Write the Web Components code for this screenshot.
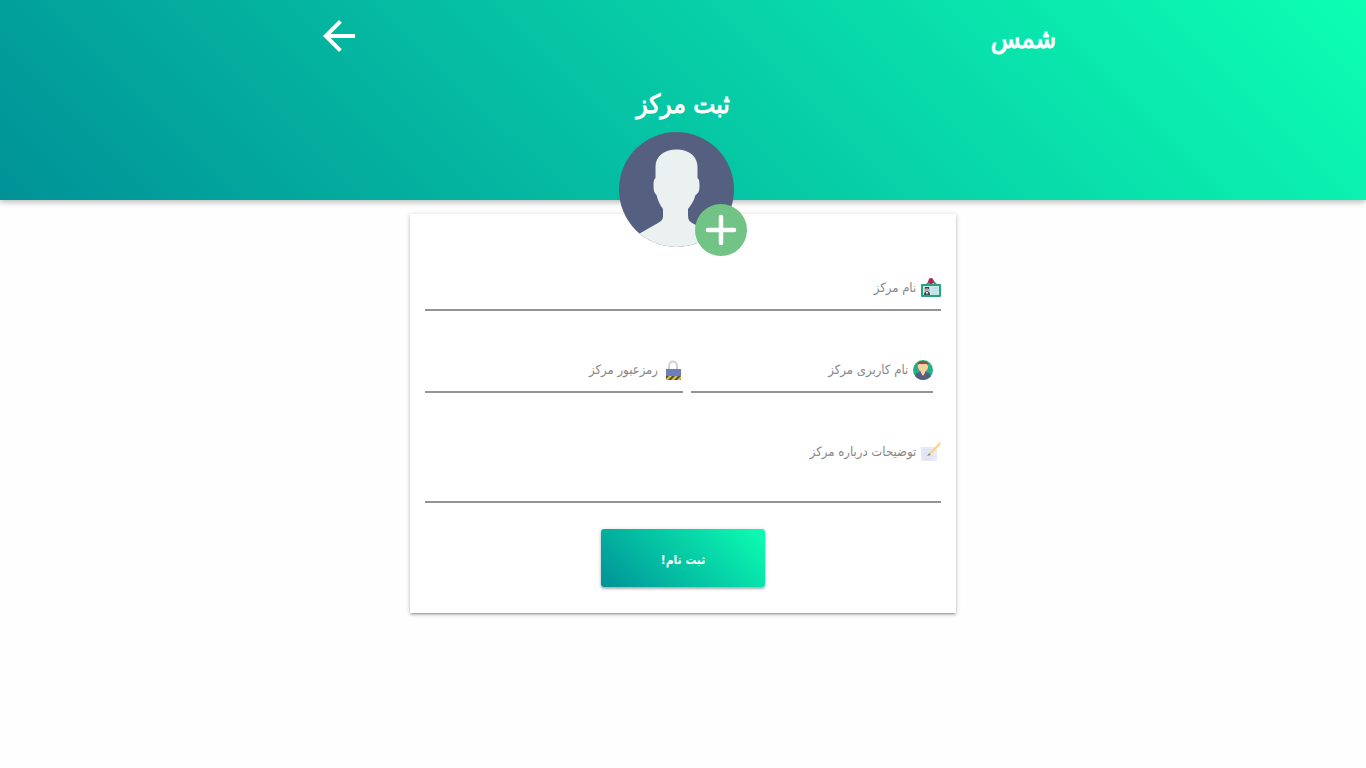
<!DOCTYPE html>
<html lang="fa" dir="rtl">
<head>
<meta charset="utf-8">
<title>ثبت مرکز</title>
<style>
  body { margin: 0; box-sizing: border-box; min-height: 100vh; padding-bottom: 24px; background: #fefefe; font-family: "DejaVu Sans Condensed", "DejaVu Sans", sans-serif; --brand: linear-gradient(45deg, #009297, #0cffb3); }
</style>
</head>
<body>
<register-page></register-page>

<template id="t-page">
  <style>
    :host { display: block; padding-bottom: 24px; }
    main { width: 40%; min-width: 320px; margin: 14px auto 0; }
  </style>
  <page-header brand="شمس" heading="ثبت مرکز"></page-header>
  <main>
    <form-card>
      <avatar-picker slot="avatar"></avatar-picker>
      <form-field label="نام مرکز" name="center">
        <svg slot="icon" viewBox="0 0 20 20" width="20" height="20">
          <path d="M0 7q0-1 1-1h4l4-4h3l4 4h3q1 0 1 1v11q0 1-1 1H1q-1 0-1-1z" fill="#28a37c"/>
          <path d="M2 8h16v9H2z" fill="#c9e9ec"/>
          <path d="M8 6l2-3 3 3z" fill="#e8f4f2"/>
          <path d="M8 1q2-2 4 0l1 3-2 2H9L7 4z" fill="#b91f55"/>
          <path d="M3 9h6v8H3z" fill="#a5cdd8"/>
          <circle cx="6" cy="11" r="2" fill="#d39b80"/>
          <path d="M4 11V9h4v2L6 10zM3 17c0-5 6-5 6 0z" fill="#34465d"/>
          <path d="M5 14h2l-1 3z" fill="#fff"/>
          <path d="M11 10h6M11 13h6M11 16h6" stroke="#a9d3da" stroke-opacity=".7"/>
        </svg>
      </form-field>
      <field-row>
        <form-field class="inset" label="نام کاربری مرکز" name="user">
          <svg slot="icon" viewBox="0 0 20 20" width="20" height="20">
            <circle cx="10" cy="10" r="10" fill="#25ae88"/>
            <path d="M2 16c1-3 3-4 6-4h4c3 0 5 1 6 4a10 10 0 0 1-16 0z" fill="#556080"/>
            <path d="M8 10h4v3l-2 3-2-3z" fill="#fbce9d"/>
            <path d="M5 4h10c1 5-2 8-5 8S4 9 5 4z" fill="#fbce9d"/>
            <path d="M5 5c-1-3 2-4 5-4s6 1 5 5l-1-2H6z" fill="#7b5a3d"/>
          </svg>
        </form-field>
        <form-field label="رمزعبور مرکز" name="password" type="password">
          <svg slot="icon" viewBox="0 0 20 20" width="20" height="20">
            <path d="M6 10V6c0-6 8-6 8 0v4" fill="none" stroke="#cfd0d2" stroke-width="2"/>
            <path d="M3 9h15v11H3z" fill="#6c7dbb"/>
            <path d="M3 16h15v4H3z" fill="#4b5058"/>
            <path d="M3 19l3-3h3l-4 4H3zM8 20l4-4h3l-4 4zM14 20l4-4v3l-1 1z" fill="#e8c02c"/>
          </svg>
        </form-field>
      </field-row>
      <form-field label="توضیحات درباره مرکز" name="about" multiline>
        <svg slot="icon" viewBox="0 0 20 20" width="20" height="20">
          <path d="M0 5h16v14H0z" fill="#e8ebf7"/>
          <path d="M2 8h8M2 11h5M2 14h11M2 17h9" stroke="#d8dcec"/>
          <path d="M8 11L18 1l2-1-1 3L9 13z" fill="#fad083"/>
          <path d="M6 14l2-3 2 2z" fill="#8b8d99"/>
        </svg>
      </form-field>
      <submit-button slot="action">ثبت نام!</submit-button>
    </form-card>
  </main>
</template>

<template id="t-header">
  <style>
    :host { display: block; }
    header { height: 200px; box-sizing: border-box; padding-top: 12px; background: var(--brand); color: #fff;
      box-shadow: 0 2px 5px rgba(0,0,0,.2), 0 2px 8px rgba(0,0,0,.1); }
    nav { display: flex; align-items: center; justify-content: space-between; box-sizing: border-box; max-width: 746px; margin: 0 auto; padding-left: 5px; height: 48px; }
    a { color: inherit; text-decoration: none; }
    .brand { padding-top: 6px; font-size: 27px; line-height: 48px; -webkit-text-stroke: 1px; }
    .back, svg { display: block; }
    h1 { margin: 24px 0 0; font-size: 26px; font-weight: 400; line-height: 40px; text-align: center; -webkit-text-stroke: 1px; }
  </style>
  <header>
    <nav>
      <a class="brand" href="#"></a>
      <a class="back" href="#" aria-label="بازگشت"><svg width="48" height="48" viewBox="0 0 24 24"><path fill="#fff" d="M20 11H7.830l5.590-5.590L12 4l-8 8 8 8 1.410-1.410L7.830 13H20v-2z"/></svg></a>
    </nav>
    <h1></h1>
  </header>
</template>

<template id="t-card">
  <style>
    :host { display: block; }
    form { display: flex; flex-direction: column; box-sizing: border-box; padding: 0 15px 26px; background: #fff;
      box-shadow: 0 2px 2px rgba(0,0,0,.14), 0 3px 1px -2px rgba(0,0,0,.12), 0 1px 5px rgba(0,0,0,.2); }
    .avatar { display: flex; justify-content: center; margin: -82px 0 11px; }
    .fields { display: flex; flex-direction: column; gap: 38px; }
    .action { display: flex; justify-content: center; margin-top: 26px; }
  </style>
  <form>
    <div class="avatar"><slot name="avatar"></slot></div>
    <div class="fields"><slot></slot></div>
    <div class="action"><slot name="action"></slot></div>
  </form>
</template>

<template id="t-avatar">
  <style>
    :host { display: block; }
    button { display: block; padding: 0; border: 0; background: none; cursor: pointer; }
    svg { display: block; }
  </style>
  <button type="button" aria-label="افزودن تصویر">
    <svg width="128" height="124" viewBox="0 0 128 124">
      <defs><clipPath id="disc"><circle cx="57.5" cy="57.5" r="57.5"/></clipPath></defs>
      <g clip-path="url(#disc)">
        <path d="M0 0h116v116H0z" fill="#556080"/>
        <path fill="#ebf0f0" d="M36.500 46V35C36.500 24 45 17.500 57.500 17.500S78.500 24 78.500 35V46C80 47 80.500 49 80.500 53.500S80 61 76.500 63C75 69 72 73 69 77V84C69 88 71 90 74 91.500L95 103V118H18V103L39 91C42 89 44 88 44 84V77C41 73 39 69 37.500 63C35 61 34.500 58 34.500 53.500S35 47 36.500 46Z"/>
      </g>
      <circle cx="102" cy="98" r="26" fill="#71c386"/>
      <path d="M102 85v26M89 98h26" stroke="#fff" stroke-width="4.500" stroke-linecap="round"/>
    </svg>
  </button>
</template>

<template id="t-row">
  <style>
    :host { display: grid; grid-template-columns: 1fr 1fr; }
    ::slotted(.inset) { margin: 0 8px; }
  </style>
  <slot></slot>
</template>

<template id="t-field">
  <style>
    :host { display: block; min-width: 0; }
    .field { display: grid; grid-template-columns: minmax(0, 1fr); height: 44px; }
    :host([multiline]) .field { height: 72px; }
    label, input, textarea { grid-area: 1 / 1; }
    label { z-index: 1; display: flex; align-items: center; align-self: start; gap: 5px; margin-top: 11px; height: 20px; color: #888; font-size: 13px; line-height: 20px; pointer-events: none; }
    input, textarea { box-sizing: border-box; width: 100%; height: 100%; margin: 0; padding: 8px 25px 8px 0; border: 0; border-bottom: 2px solid #949494; border-radius: 0;
      background: none; font: inherit; font-size: 13px; resize: none; outline: 0; }
    .field:focus-within :is(input, textarea) { border-color: #00b39d; }
    .typed label span { visibility: hidden; }
  </style>
  <div class="field"><label for="control"><slot name="icon"></slot><span></span></label></div>
</template>

<template id="t-submit">
  <style>
    :host { display: block; }
    button { min-width: 164px; height: 58px; padding: 4px 16px 0; border: 0; border-radius: 3px; background: var(--brand); color: #fff; font-family: inherit; font-size: 12px; font-weight: 700; line-height: 20px; cursor: pointer;
      box-shadow: 0 2px 2px rgba(0,0,0,.2), 0 1px 4px rgba(0,0,0,.2); }
  </style>
  <button type="submit"><slot></slot></button>
</template>

<script>
  class Base extends HTMLElement {
    constructor() {
      super();
      this.attachShadow({ mode: 'open' }).append(document.importNode(document.getElementById(this.constructor.template).content, true));
    }
    $(selector) { return this.shadowRoot.querySelector(selector); }
  }
  customElements.define('page-header', class extends Base {
    static template = 't-header';
    connectedCallback() {
      this.$('.brand').textContent = this.getAttribute('brand');
      this.$('h1').textContent = this.getAttribute('heading');
    }
  });
  customElements.define('form-card', class extends Base { static template = 't-card'; });
  customElements.define('avatar-picker', class extends Base { static template = 't-avatar'; });
  customElements.define('field-row', class extends Base { static template = 't-row'; });
  customElements.define('form-field', class extends Base {
    static template = 't-field';
    connectedCallback() {
      if (this.control) return;
      this.$('span').textContent = this.getAttribute('label');
      const multiline = this.hasAttribute('multiline');
      this.control = document.createElement(multiline ? 'textarea' : 'input');
      if (!multiline) this.control.type = this.getAttribute('type') || 'text';
      this.control.id = 'control';
      this.control.name = this.getAttribute('name');
      const field = this.$('.field');
      field.append(this.control);
      this.control.addEventListener('input', () => field.classList.toggle('typed', this.control.value !== ''));
    }
  });
  customElements.define('submit-button', class extends Base { static template = 't-submit'; });
  customElements.define('register-page', class extends Base { static template = 't-page'; });
</script>
</body>
</html>
